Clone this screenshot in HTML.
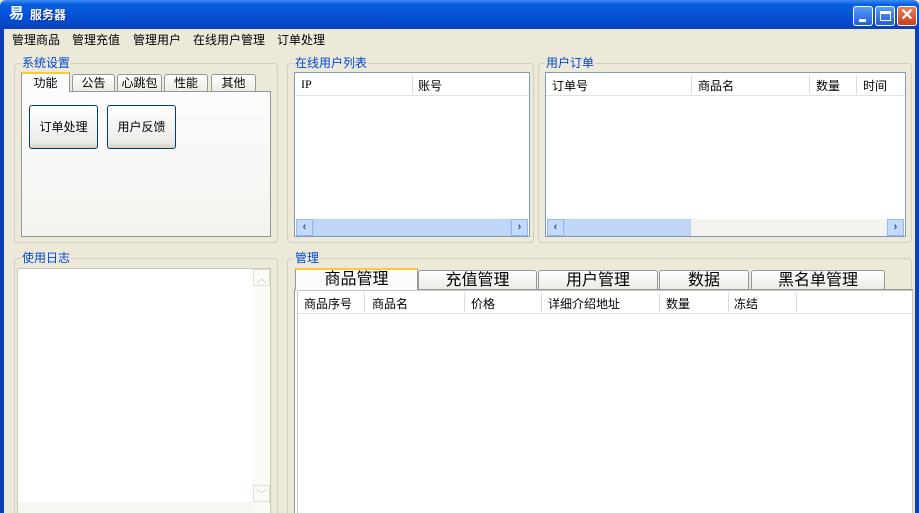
<!DOCTYPE html>
<html style="width:919px;height:513px;overflow:hidden"><head><meta charset="utf-8"><style>
*{margin:0;padding:0;box-sizing:border-box}
body{width:919px;height:513px;overflow:hidden;background:#ece9d8;font-family:"Liberation Sans","Noto Sans CJK SC",sans-serif;font-size:12px;color:#000;position:relative}
.a{position:absolute}
#title{left:0;top:0;width:919px;height:29px;background:linear-gradient(#3d8cf5 0%,#0a5fe0 15%,#0553d8 50%,#0548c8 85%,#0a3fb0 100%);border-radius:6px 6px 0 0}
#lb{left:0;top:29px;width:4px;height:484px;background:#0a3fb8}
#rb{right:0;top:29px;width:4px;height:484px;background:#0a3fb8}
.grp{border:1px solid #d0d0bf;border-radius:4px}
.lbl{background:#ece9d8;color:#0046d5;padding:0 1px;line-height:14px}
.white{background:#fff;border:1px solid #7f9db9}
.hdr{background:#fff;border-bottom:1px solid #e2e2da;height:23px}
.hdr span{position:absolute;top:4px}
.dv{position:absolute;top:2px;width:1px;height:19px;background:#dedbd0}
.tab{background:linear-gradient(#fff,#ecebe5);border:1px solid #919b9c;border-bottom:none;border-radius:3px 3px 0 0;text-align:center}
.tabsel{background:#fcfcfe;border:1px solid #919b9c;border-top:2px solid #ffc83c;border-bottom:none;text-align:center}
.btn{border:1px solid #003c74;border-radius:3px;background:linear-gradient(#fff,#ecebe6 85%,#d6d0c5);text-align:center;line-height:42px}
.sb{background:#c1d7f7;border:1px solid #b8cff5}
.arr{background:#c4dafc;border:1px solid #98b7ef;color:#2d4e9e;font-size:11px;font-weight:bold;text-align:center;line-height:15px}
</style></head><body>
<div id="title" class="a"></div>
<div class="a" style="left:9px;top:6px;width:16px;height:16px;color:#fff;font-size:15px;font-weight:bold;line-height:16px">易</div>
<div class="a" style="left:30px;top:6px;color:#fff;font-weight:bold;font-size:12px;text-shadow:1px 1px #0a2a80">服务器</div>
<div class="a" style="left:853px;top:6px;width:20px;height:20px;border:1px solid #fff;border-radius:3px;background:linear-gradient(#5a9af8,#1f5fe0)"><div class="a" style="left:5px;top:12px;width:7px;height:3px;background:#fff"></div></div>
<div class="a" style="left:875px;top:6px;width:20px;height:20px;border:1px solid #fff;border-radius:3px;background:linear-gradient(#5a9af8,#1f5fe0)"><div class="a" style="left:4px;top:4px;width:11px;height:10px;border:1px solid #fff;border-top:3px solid #fff"></div></div>
<div class="a" style="left:897px;top:6px;width:20px;height:20px;border:1px solid #fff;border-radius:3px;background:linear-gradient(#e8805a,#c8401c);color:#fff;font-weight:bold;font-size:16px;line-height:18px;text-align:center">✕</div>
<div id="lb" class="a"></div><div id="rb" class="a"></div>
<div class="a" style="left:12px;top:31px">管理商品</div>
<div class="a" style="left:72px;top:31px">管理充值</div>
<div class="a" style="left:133px;top:31px">管理用户</div>
<div class="a" style="left:193px;top:31px">在线用户管理</div>
<div class="a" style="left:277px;top:31px">订单处理</div>

<div class="a grp" style="left:14px;top:63px;width:264px;height:180px"></div>
<div class="a lbl" style="left:21px;top:56px">系统设置</div>
<div class="a" style="left:21px;top:91px;width:250px;height:146px;background:linear-gradient(#fcfcfe,#f4f3ee);border:1px solid #919b9c"></div>
<div class="a tabsel" style="left:21px;top:72px;width:49px;height:20px;line-height:18px">功能</div>
<div class="a tab" style="left:72px;top:74px;width:43px;height:17px;line-height:16px">公告</div>
<div class="a tab" style="left:117px;top:74px;width:45px;height:17px;line-height:16px">心跳包</div>
<div class="a tab" style="left:164px;top:74px;width:44px;height:17px;line-height:16px">性能</div>
<div class="a tab" style="left:211px;top:74px;width:45px;height:17px;line-height:16px">其他</div>
<div class="a btn" style="left:29px;top:105px;width:69px;height:44px">订单处理</div>
<div class="a btn" style="left:107px;top:105px;width:69px;height:44px">用户反馈</div>

<div class="a grp" style="left:287px;top:63px;width:247px;height:180px"></div>
<div class="a lbl" style="left:294px;top:56px">在线用户列表</div>
<div class="a white" style="left:294px;top:72px;width:236px;height:165px">
 <div class="a hdr" style="left:0;top:0;width:234px"><span style="left:6px;font-family:'Liberation Serif',serif">IP</span><div class="dv" style="left:117px"></div><span style="left:123px">账号</span></div>
 <div class="a arr" style="left:1px;top:146px;width:17px;height:17px">‹</div>
 <div class="a sb" style="left:18px;top:146px;width:198px;height:17px"></div>
 <div class="a arr" style="left:216px;top:146px;width:17px;height:17px">›</div>
</div>

<div class="a grp" style="left:538px;top:63px;width:374px;height:180px"></div>
<div class="a lbl" style="left:545px;top:56px">用户订单</div>
<div class="a white" style="left:545px;top:72px;width:361px;height:165px">
 <div class="a hdr" style="left:0;top:0;width:359px"><span style="left:6px">订单号</span><div class="dv" style="left:145px"></div><span style="left:152px">商品名</span><div class="dv" style="left:263px"></div><span style="left:270px">数量</span><div class="dv" style="left:310px"></div><span style="left:317px">时间</span></div>
 <div class="a" style="left:1px;top:146px;width:357px;height:17px;background:#f3f3ef"></div>
 <div class="a arr" style="left:1px;top:146px;width:17px;height:17px">‹</div>
 <div class="a sb" style="left:18px;top:146px;width:127px;height:17px"></div>
 <div class="a arr" style="left:341px;top:146px;width:17px;height:17px">›</div>
</div>

<div class="a grp" style="left:14px;top:258px;width:264px;height:270px"></div>
<div class="a lbl" style="left:21px;top:251px">使用日志</div>
<div class="a" style="left:17px;top:268px;width:254px;height:260px;background:#fff;border:1px solid #c9c7ba">
 <div class="a" style="left:235px;top:0;width:17px;height:245px;background:#fafaf6"></div>
 <div class="a" style="left:235px;top:0;width:17px;height:17px;border:1px solid #e0dfd8;color:#c8c6bc;text-align:center;font-size:10px">︿</div>
 <div class="a" style="left:235px;top:216px;width:17px;height:17px;border:1px solid #e0dfd8;color:#c8c6bc;text-align:center;font-size:10px">﹀</div>
 <div class="a" style="left:0;top:233px;width:235px;height:17px;background:#f6f6f2"></div>
</div>

<div class="a grp" style="left:287px;top:258px;width:625px;height:270px"></div>
<div class="a lbl" style="left:294px;top:251px">管理</div>
<div class="a" style="left:294px;top:289px;width:619px;height:230px;background:#fcfcfe;border:1px solid #919b9c"></div>
<div class="a tabsel" style="left:295px;top:268px;width:123px;height:22px;font-size:16px;line-height:20px">商品管理</div>
<div class="a tab" style="left:418px;top:270px;width:119px;height:19px;font-size:16px;line-height:19px">充值管理</div>
<div class="a tab" style="left:538px;top:270px;width:120px;height:19px;font-size:16px;line-height:19px">用户管理</div>
<div class="a tab" style="left:659px;top:270px;width:90px;height:19px;font-size:16px;line-height:19px">数据</div>
<div class="a tab" style="left:751px;top:270px;width:134px;height:19px;font-size:16px;line-height:19px">黑名单管理</div>
<div class="a white" style="left:297px;top:290px;width:616px;height:230px;border-color:#c9c7ba">
 <div class="a hdr" style="left:0;top:0;width:614px"><span style="left:6px">商品序号</span><div class="dv" style="left:66px"></div><span style="left:74px">商品名</span><div class="dv" style="left:166px"></div><span style="left:173px">价格</span><div class="dv" style="left:243px"></div><span style="left:250px">详细介绍地址</span><div class="dv" style="left:361px"></div><span style="left:368px">数量</span><div class="dv" style="left:430px"></div><span style="left:436px">冻结</span><div class="dv" style="left:498px"></div></div>
</div>
</body></html>
